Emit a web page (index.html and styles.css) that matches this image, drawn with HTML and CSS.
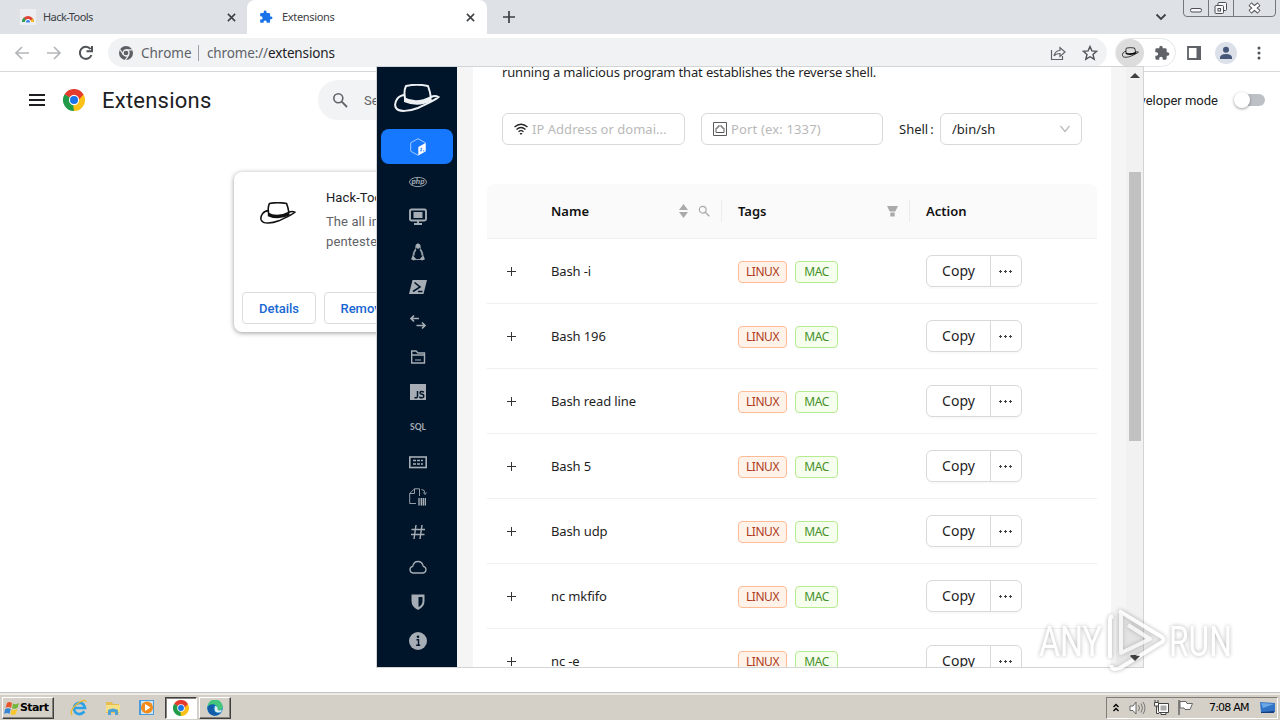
FILE: index.html
```html
<!DOCTYPE html>
<html lang="en">
<head>
<meta charset="utf-8">
<title>Extensions</title>
<link rel="stylesheet" href="styles.css">
</head>
<body>
<svg width="0" height="0" class="defs">
  <symbol id="hat" viewBox="0 0 46 28">
    <path d="M11 14C10 9 11 4 12 2Q23-.5 34 2Q36 7 37 14" fill="none" stroke="currentColor" stroke-width="2"/>
    <path d="M10 13Q22 20 37 12L38 17Q24 24 10 18Z" fill="currentColor"/>
    <path d="M11 11C4 11 0 18 1.500 23C4 29 16 27 24 24C32 20 40 17 44.500 13Q41 11 37 13" fill="none" stroke="currentColor" stroke-width="2"/>
  </symbol>
  <symbol id="puzzle" viewBox="0 0 24 24"><path fill="currentColor" d="M20.5 11H19V7a2 2 0 0 0-2-2h-4V3.5a2.5 2.5 0 0 0-5 0V5H4a2 2 0 0 0-2 2v3.8h1.500a2.700 2.700 0 0 1 0 5.400H2V20a2 2 0 0 0 2 2h3.800v-1.500a2.700 2.700 0 0 1 5.400 0V22H17a2 2 0 0 0 2-2v-4h1.500a2.500 2.500 0 0 0 0-5z"/></symbol>
  <symbol id="chrome" viewBox="0 0 24 24">
    <path fill="#e33b2e" d="M12 12L1.600 6A12 12 0 0 1 22.400 6Z"/>
    <path fill="#fbc116" d="M12 12L22.400 6A12 12 0 0 1 12 24Z"/>
    <path fill="#229b48" d="M12 12L12 24A12 12 0 0 1 1.600 6Z"/>
    <path fill="#e33b2e" d="M12 6H22.400L17 12Z"/><path fill="#229b48" d="M1.600 6L7 15L12 12Z"/><path fill="#fbc116" d="M17.200 15L12 24L11 17Z"/>
    <circle cx="12" cy="12" r="5.600" fill="#fff"/><circle cx="12" cy="12" r="4.400" fill="#1a73e8"/>
  </symbol>
  <symbol id="search" viewBox="0 0 16 16"><circle cx="6.300" cy="6.300" r="4.500" fill="none" stroke="currentColor" stroke-width="1.600"/><path d="M9.700 9.700L15 15" stroke="currentColor" stroke-width="1.800"/></symbol>
  <symbol id="close" viewBox="0 0 10 10"><path d="M1 1L9 9M9 1L1 9" stroke="currentColor" stroke-width="1.700"/></symbol>
</svg>

<div class="screen">
  <header class="tabs">
    <div class="tab tab-idle">
      <svg class="i16" viewBox="0 0 16 16"><rect width="16" height="16" fill="#eceef1"/><path d="M2 13A6 6 0 0 1 14 13" fill="#e04436"/><path d="M2 13A6 6 0 0 1 4 8.500L7 13Z" fill="#2da052"/><path d="M9 13L13 9.500L14 13Z" fill="#fbc116"/><circle cx="8" cy="13" r="2.600" fill="#4284f3" stroke="#fff"/><rect y="13.500" width="16" height="3" fill="#eceef1"/></svg>
      <span class="tab-title">Hack-Tools</span>
      <svg class="close"><use href="#close"/></svg>
    </div>
    <div class="tab tab-active">
      <svg class="i14 blue"><use href="#puzzle"/></svg>
      <span class="tab-title">Extensions</span>
      <svg class="close"><use href="#close"/></svg>
    </div>
    <svg class="newtab" viewBox="0 0 12 12"><path d="M6 0V12M0 6H12" stroke="#3c4043" stroke-width="1.700"/></svg>
    <svg class="chev" viewBox="0 0 12 8"><path d="M1.500 1.500L6 6L10.500 1.500" fill="none" stroke="#3c4043" stroke-width="1.800"/></svg>
    <svg class="winbtns" viewBox="0 0 94 18"><path d="M.5 0V13Q.5 16.500 4 16.500H89Q92.500 16.500 92.500 13V0M25.500 0V16M50.500 0V16" fill="none" stroke="#74777e"/><g fill="#f7f7f9" stroke="#4d5057"><rect x="7.500" y="8.500" width="11" height="3.500" rx="1.500"/><rect x="35" y="2.500" width="8.500" height="8" rx="1"/><rect x="32" y="5.500" width="8.500" height="8" rx="1"/><rect x="35" y="8.500" width="2.500" height="2.500"/></g><path d="M67 4L76 12M76 4L67 12" stroke="#4d5057" stroke-width="4.500"/><path d="M67.500 4.500L75.500 11.500M75.500 4.500L67.500 11.500" stroke="#fff" stroke-width="2.500"/></svg>
  </header>

  <div class="toolbar">
    <svg class="nav" viewBox="0 0 84 18"><g fill="none" stroke-width="1.700"><path d="M15 9H2M8 3L2 9L8 15M33 9H46M40 3L46 9L40 15" stroke="#b4b6b9"/><path d="M76.500 5A6 6 0 1 0 77.500 11M78 2V7.200H72.500" stroke="#505357" stroke-width="2"/></g></svg>
    <div class="omni">
      <svg class="i14" viewBox="0 0 14 14"><circle cx="7" cy="7" r="7" fill="#5c6065"/><circle cx="7" cy="7" r="3" fill="#5c6065" stroke="#eef0f2" stroke-width="1.300"/><path d="M7 3.800H13.300M4.200 8.500L1 3.500M9.800 8.600L6.500 14" stroke="#eef0f2" stroke-width="1.200"/></svg>
      <span class="site">Chrome</span><span class="bar"></span><span class="url"><span class="scheme">chrome://</span>extensions</span>
      <svg class="share" viewBox="0 0 16 16"><path d="M1.500 5V14.500H12.500V11M4 11C5 7 7 5.500 10 5.500V2.500L15 7L10 11.500V8.500C7.500 8.500 5.500 9 4 11Z" fill="none" stroke="#5f6368" stroke-width="1.200"/></svg>
      <svg class="star" viewBox="0 0 16 16"><path d="M8 1.500L9.900 5.900L14.700 6.300L11 9.500L12.200 14.200L8 11.700L3.800 14.200L5 9.500L1.300 6.300L6.100 5.900Z" fill="none" stroke="#505357" stroke-width="1.400"/></svg>
    </div>
    <div class="extpill"><span class="hatbtn"><svg class="minihat"><use href="#hat"/></svg></span><svg class="i16 grey"><use href="#puzzle"/></svg></div>
    <svg class="panel" viewBox="0 0 14 14"><path d="M1 1H13V13H1Z" fill="#fff" stroke="#5f6368" stroke-width="1.800"/><path d="M9.500 0H14V14H9.500Z" fill="#5f6368"/></svg>
    <svg class="avatar" viewBox="0 0 22 22"><circle cx="11" cy="11" r="11" fill="#dce0e8"/><circle cx="11" cy="7.700" r="3" fill="#46577a"/><path d="M5 17V15Q6 12 11 12Q16 12 17 15V17Z" fill="#46577a"/></svg>
    <svg class="dots" viewBox="0 0 4 14"><g fill="#505357"><circle cx="2" cy="2" r="1.500"/><circle cx="2" cy="7" r="1.500"/><circle cx="2" cy="12" r="1.500"/></g></svg>
  </div>

  <main class="page">
    <div class="pagebar">
      <svg class="menuicon" viewBox="0 0 16 12"><path d="M0 1H16M0 6H16M0 11H16" stroke="#1e1f22" stroke-width="2"/></svg>
      <svg class="logo"><use href="#chrome"/></svg>
      <h1>Extensions</h1>
      <div class="searchbox"><svg class="i16s"><use href="#search"/></svg><span>Search extensions</span></div>
      <span class="dev">Developer mode</span>
      <span class="toggle"><i></i></span>
    </div>
    <section class="extcard">
      <div class="extinfo">
        <svg class="cardhat"><use href="#hat"/></svg>
        <div><h2>Hack-Tools</h2><p>The all in one browser extension for pentesters</p></div>
      </div>
      <div class="extbtns"><span class="details">Details</span><span class="remove">Remove</span></div>
    </section>
  </main>

  <footer class="taskbar">
    <div class="start"><svg class="flag" viewBox="0 0 16 16"><path d="M3 3Q5 1 8 3L7 8Q4 6 1.500 8Z" fill="#e9562a"/><path d="M9 3.500Q12 5 15 3L13.500 8Q11 9.500 8 8.200Z" fill="#75b73b"/><path d="M1.200 9Q4 7.500 6.700 9L5.500 14Q3 12 0 14Z" fill="#3587d3"/><path d="M7.700 9.300Q10 11 13.300 9L12 14Q9.500 16 6.500 14.300Z" fill="#f8c52c"/></svg>Start</div>
    <svg class="tic ie" viewBox="0 0 18 18"><path d="M14.500 12.500Q10 17 5.500 13.500Q2 8.500 6 5Q13 1.500 15 9H5" fill="none" stroke="#2da1e5" stroke-width="2.600"/><path d="M2 16Q-1 12 7 5Q15-1 16 3" fill="none" stroke="#edb92e" stroke-width="1.400"/></svg>
    <svg class="tic" viewBox="0 0 18 18"><path d="M2 3H8L9 5H15V14H2Z" fill="#e6bd50"/><path d="M2 6H16V13H2Z" fill="#f7df86"/><path d="M4 16V11Q9 8 14 11V16H11V13H7V16Z" fill="#4fa3d2"/></svg>
    <svg class="tic wm" viewBox="0 0 18 18"><rect x="1" y="1" width="15" height="15" fill="#4c9bdb"/><rect x="3" y="2" width="12" height="13" fill="#cde6f6"/><circle cx="9" cy="8.500" r="6" fill="#f28a1c"/><path d="M7 5L12.500 8.500L7 12Z" fill="#fff"/></svg>
    <div class="task pressed"><svg class="i16b"><use href="#chrome"/></svg></div>
    <div class="task"><svg class="i16b" viewBox="0 0 16 16"><circle cx="8" cy="8" r="7.800" fill="#1587cc"/><path d="M.5 7A7.600 7.600 0 0 1 15.700 7Q15 11 10 10Q11 5 7 4.500Q3 4 .5 7Z" fill="#42c77c"/><path d="M.5 7Q3 3 8 5Q5 8 8 12Q10 14 14 12.500Q11 16 7 15.800Q0 14 .5 7Z" fill="#125ca8"/><path d="M8 6Q11 6 10.500 9.500Q12 11 15 10L14 12Q8 14 7.500 9Z" fill="#dfeef5"/></svg></div>
    <div class="tray">
      <svg class="traychev" viewBox="0 0 6 9"><path d="M.5 4L3 1.500L5.500 4M.5 8L3 5.500L5.500 8" fill="none" stroke="#000" stroke-width="1.400"/></svg>
      <svg class="traysnd" viewBox="0 0 17 14"><path d="M1 5H4L7 1V13L4 9.500H1Z" fill="#fff" stroke="#666"/><path d="M9.500 4Q11.500 7 9.500 10M12 2.500Q15 7 12 11.500M14 1Q18 7 14 13" fill="none" stroke="#777"/></svg>
      <svg class="traynet" viewBox="0 0 17 16"><path d="M5.500 3.500H15.500V12.500H5.500ZM8 12.500V14.500H13V12.500" fill="#fff" stroke="#444"/><rect x="7.500" y="5.500" width="6" height="5" fill="#aaa"/><path d="M1.500 2.500H5.500V6H1.500ZM3.500 6V13.500H6M2 0V2M5 0V2" fill="#fff" stroke="#444"/></svg>
      <svg class="trayflag" viewBox="0 0 16 15"><path d="M1 0V15" stroke="#666" stroke-width="1.500"/><path d="M2 1.500H8L9 3.500H14.500L12 9.500H7L6 8H2Z" fill="#fff" stroke="#666"/></svg>
      <span class="clock">7:08 AM</span>
      <svg class="desk" viewBox="0 0 15 13"><path d="M0 1L15 2V11L1 12Z" fill="#3374c7"/><path d="M1 2L14 3L3 7Z" fill="#6ba9e6"/><path d="M1 11L14 10V12H1Z" fill="#183d7c"/></svg>
    </div>
  </footer>

  <div class="popup">
    <aside class="side">
      <svg class="bighat"><use href="#hat"/></svg>
      <nav>
        <a class="sel"><svg viewBox="0 0 18 18"><path d="M9 .7L16.300 4.800V13.200L9 17.300L1.700 13.200V4.800Z" fill="none" stroke="#a4caff"/><path d="M9.300 9L16.500 5V13.300L9.300 17.300Z" fill="#fff"/><path d="M11.500 10.500L13 10L11.500 13L13 12.500M14 13L15.300 12.300" stroke="#1677ff" stroke-width=".8" fill="none"/></svg></a>
        <a><svg viewBox="0 0 18 18"><ellipse cx="9" cy="9" rx="8.500" ry="4.600" fill="none" stroke="currentColor" stroke-width=".9"/><text x="2.500" y="11.300" font-size="8" font-weight="700" font-style="italic" textLength="13" lengthAdjust="spacingAndGlyphs" class="rb">php</text></svg></a>
        <a><svg viewBox="0 0 18 18"><path d="M2.500 1.500H15.500Q17 1.500 17 3V11Q17 12.500 15.500 12.500H2.500Q1 12.500 1 11V3Q1 1.500 2.500 1.500ZM9 12.500V16M5 16H13" fill="none" stroke="currentColor" stroke-width="1.900"/><rect x="4.500" y="4" width="9" height="6" fill="currentColor"/></svg></a>
        <a><svg viewBox="0 0 18 18"><path d="M7 2Q9-.5 11 2L11.300 5.500Q14.500 9.500 14 13.500L12 16.500H6L4 13.500Q3.500 9.500 6.700 5.500Z" fill="none" stroke="currentColor" stroke-width=".9"/><path d="M7 2Q9-.5 11 2L11 4.500L9 6L7 4.500ZM3.800 12.500L7.200 16L5 17.500L2 16.300ZM14.200 12.500L10.800 16L13 17.500L16 16.300Z" fill="currentColor"/><path d="M7 6.500Q4.500 10 5 12.500M11 6.500Q13.500 10 13 12.500" stroke="currentColor" stroke-width="1.200" fill="none"/></svg></a>
        <a><svg viewBox="0 0 18 18"><path d="M3.500 2H18L14.500 16H0Z" fill="currentColor"/><path d="M5.500 4.500L11 9L4 13.500M9 13.500H13.500" fill="none" stroke="#001529" stroke-width="1.600"/></svg></a>
        <a><svg viewBox="0 0 18 18"><path d="M10 5.500H2M5 2.500L2 5.500L5 8.500M7.500 12.500H16M13 9.500L16 12.500L13 15.500" fill="none" stroke="currentColor" stroke-width="1.700"/></svg></a>
        <a><svg viewBox="0 0 18 18"><path d="M2.700 3H7L9 5H15.500V15H2.700ZM2.700 3V7H15.500" fill="none" stroke="currentColor" stroke-width="1.400"/><path d="M6 12H12" stroke="currentColor"/></svg></a>
        <a><svg viewBox="0 0 18 18"><rect x="1" y="1" width="16" height="16" fill="currentColor"/><path d="M8.500 8V13Q8.500 15.500 5.500 14.500M15 9Q11 7.500 11 10Q11 11 13 11.300Q15.500 12 14.500 14Q13 15.500 10.300 14" fill="none" stroke="#001529" stroke-width="1.500"/></svg></a>
        <a><svg viewBox="0 0 18 18"><text x="1" y="12" font-size="9.500" font-weight="700" textLength="16" lengthAdjust="spacingAndGlyphs" class="rb">SQL</text></svg></a>
        <a><svg viewBox="0 0 18 18"><rect x=".8" y="4" width="16.400" height="10.500" fill="none" stroke="currentColor" stroke-width="1.600"/><path d="M4 7.500H7M8 7.500H11M12 7.500H14M4 11H7M8 11H11M12 11H14" stroke="currentColor" stroke-width="1.500"/></svg></a>
        <a><svg viewBox="0 0 18 18"><path d="M5.500.8L.7 5.500V15.500H7M5.500.8V5.500H.7M5.500.8H10.500V8M12.500 1.500Q16 1.500 16 5.500M14.300 4.500L16 6.500L17.600 4.500" fill="none" stroke="currentColor" stroke-width=".9"/><path d="M9 10H17V17.500H9Z" fill="currentColor" fill-opacity=".4"/><path d="M10 10V17.500M12.500 10V17.500M14.500 10V17.500M16.500 10V17.500" stroke="currentColor" stroke-width="1"/></svg></a>
        <a><svg viewBox="0 0 18 18"><path d="M7 2L5 16M13 2L11 16M2.500 6.500H16M2 11.500H15.500" fill="none" stroke="currentColor" stroke-width="1.400"/></svg></a>
        <a><svg viewBox="0 0 18 18"><path d="M4 15A3.400 3.400 0 0 1 3.700 8.300Q4.800 3.500 9 3.500Q13.200 3.500 14.300 8.300A3.400 3.400 0 0 1 14 15Z" fill="none" stroke="currentColor" stroke-width="1.300"/></svg></a>
        <a><svg viewBox="0 0 18 18"><path d="M2.500 1.500H15.500V8Q15.500 14 9 17Q2.500 14 2.500 8Z" fill="currentColor"/><path d="M9.500 4H13.500V8Q13.500 12 9.500 14Z" fill="#001529"/></svg></a>
        <a class="last"><svg viewBox="0 0 18 18"><circle cx="9" cy="9" r="9" fill="currentColor"/><circle cx="9" cy="4.800" r="1.300" fill="#001529"/><path d="M7.500 7.700H9.500V13M7.200 13.300H11.200" fill="none" stroke="#001529" stroke-width="1.400"/></svg></a>
      </nav>
    </aside>
    <div class="content">
      <p class="intro">running a malicious program that establishes the reverse shell.</p>
      <div class="form">
        <div class="input"><svg class="wifi" viewBox="0 0 14 14"><path d="M.5 5Q7-.5 13.500 5M2.500 7.500Q7 3.500 11.500 7.500M4.500 9.700Q7 7.500 9.500 9.700" fill="none" stroke="#222" stroke-width="1.300"/><path d="M5.500 11L7 13L8.500 11Z" fill="#222"/></svg><span>IP Address or domai...</span></div>
        <div class="input"><svg class="port" viewBox="0 0 14 14"><path d="M.5.500H13.500V13.500H.5ZM3 10.500V6H5V4H9V6H11V10.500Z" fill="none" stroke="#5a5a5a"/></svg><span>Port (ex: 1337)</span></div>
        <label>Shell<b>:</b></label>
        <div class="select"><span>/bin/sh</span><svg viewBox="0 0 10 8"><path d="M.5 1L5 6.500L9.500 1" fill="none" stroke="#b9b9b9" stroke-width="1.200"/></svg></div>
      </div>
      <div class="table">
        <div class="thead"><span></span><span class="th name">Name<svg class="sort" viewBox="0 0 9 14"><path d="M4.500 0L9 6H0ZM4.500 14L9 8H0Z" fill="#aaa"/></svg><svg class="thsearch"><use href="#search"/></svg></span><span class="th tagsh">Tags<svg class="filter" viewBox="0 0 10 10"><path d="M0 0H10L7.500 5H2.500ZM3 6H7V9.500H3Z" fill="#aaa"/></svg></span><span class="th">Action</span></div>
        <div class="row"><span class="plus"></span><span>Bash -i</span><span class="tags"><i>LINUX</i><i class="mac">MAC</i></span><span class="btn"><b>Copy</b><em></em></span></div>
        <div class="row"><span class="plus"></span><span>Bash 196</span><span class="tags"><i>LINUX</i><i class="mac">MAC</i></span><span class="btn"><b>Copy</b><em></em></span></div>
        <div class="row"><span class="plus"></span><span>Bash read line</span><span class="tags"><i>LINUX</i><i class="mac">MAC</i></span><span class="btn"><b>Copy</b><em></em></span></div>
        <div class="row"><span class="plus"></span><span>Bash 5</span><span class="tags"><i>LINUX</i><i class="mac">MAC</i></span><span class="btn"><b>Copy</b><em></em></span></div>
        <div class="row"><span class="plus"></span><span>Bash udp</span><span class="tags"><i>LINUX</i><i class="mac">MAC</i></span><span class="btn"><b>Copy</b><em></em></span></div>
        <div class="row"><span class="plus"></span><span>nc mkfifo</span><span class="tags"><i>LINUX</i><i class="mac">MAC</i></span><span class="btn"><b>Copy</b><em></em></span></div>
        <div class="row"><span class="plus"></span><span>nc -e</span><span class="tags"><i>LINUX</i><i class="mac">MAC</i></span><span class="btn"><b>Copy</b><em></em></span></div>
      </div>
    </div>
    <div class="scroll"><i class="up"></i><span class="thumb"></span><i class="down"></i></div>
  </div>

  <svg class="mark" viewBox="0 0 200 70">
    <g class="marktext"><text x="3" y="51" font-size="43" textLength="63" lengthAdjust="spacingAndGlyphs">ANY</text><text x="133" y="51" font-size="43" textLength="63" lengthAdjust="spacingAndGlyphs">RUN</text></g>
    <path d="M74 53V15Q74 12 77 11M83 6L126 32Q129 35 126 37L84 63Q76 66 75 60M85 6V48L114 34L92 20" fill="none" stroke="#fff" stroke-width="4" stroke-linejoin="round"/>
    <path d="M80 12V60L126 35L84 7Z" fill="#bbb" fill-opacity=".15"/>
  </svg>
  <i class="downarrow"></i>
</div>
</body>
</html>
```
FILE: styles.css
```css
* { box-sizing: border-box; }
body { margin: 0; }
svg { display: block; flex: none; }
.defs { position: absolute; }
.screen { position: relative; width: 1280px; height: 720px; overflow: hidden; display: flex; flex-direction: column; background: #fff; font-family: "Noto Sans", sans-serif; }
.i14 { width: 14px; height: 14px; }
.i16, .i16s, .i16b { width: 16px; height: 16px; }
.blue { color: #1a73e8; }
.grey { color: #5f6368; }
.rb { font-family: Lato, sans-serif; fill: currentColor; }

/* Tab strip */
.tabs { height: 34px; background: #dee1e6; display: flex; align-items: center; flex: none; color: #3c4043; }
.tab { height: 34px; display: flex; align-items: center; font-size: 11px; }
.tab-title { margin-top: -1px; }
.tab-idle { width: 247px; padding: 0 11px 0 20px; }
.tab-idle .tab-title { margin-left: 7px; letter-spacing: -.55px; }
.tab-active { width: 240px; background: #fff; border-radius: 8px 8px 0 0; padding: 0 12px; }
.tab-active .tab-title { margin-left: 9px; letter-spacing: -.33px; }
.close { width: 9px; height: 9px; margin-left: auto; }
.newtab { width: 12px; height: 12px; margin-left: 16px; }
.chev { width: 12px; height: 8px; margin-left: auto; }
.winbtns { width: 94px; height: 18px; margin: 0 3px 0 16px; align-self: flex-start; }

/* Toolbar */
.toolbar { height: 38px; border-bottom: 1px solid #d5d7da; display: flex; align-items: center; flex: none; }
.nav { width: 84px; height: 18px; margin-left: 14px; }
.omni { margin-left: 10px; width: 999px; height: 29px; border-radius: 15px; background: #f0f2f4; display: flex; align-items: center; padding: 0 9px 0 11px; font-size: 13.5px; color: #5f6368; }
.site { margin-left: 8px; width: 50px; }
.bar { width: 1px; height: 16px; background: #9aa0a6; margin: 0 8px 0 7px; }
.url { color: #202124; letter-spacing: -.14px; }
.scheme { color: #5f6368; }
.share { width: 16px; height: 16px; margin-left: auto; }
.star { width: 16px; height: 16px; margin-left: 16px; }
.extpill { margin-left: 8px; width: 61px; height: 29px; border: 1px solid #e4e6e8; border-radius: 15px; display: flex; align-items: center; gap: 10px; }
.hatbtn { width: 28px; height: 28px; border-radius: 50%; background: #dcdcdc; display: flex; align-items: center; justify-content: center; }
.minihat { width: 17px; height: 11px; }
.panel { width: 14px; height: 14px; margin-left: 11px; }
.avatar { width: 22px; height: 22px; margin-left: 14px; }
.dots { width: 4px; height: 14px; margin-left: 20px; }

/* Extensions page */
.page { height: 620px; flex: none; font-family: Roboto, sans-serif; color: #202124; }
.pagebar { height: 56px; display: flex; align-items: center; padding: 0 15px 0 29px; }
.menuicon { width: 16px; height: 12px; }
.logo { width: 22px; height: 22px; margin-left: 18px; }
h1 { margin: 0 0 0 17px; font-size: 22px; font-weight: 400; letter-spacing: .23px; width: 216px; }
.searchbox { width: 640px; height: 40px; border-radius: 20px; background: #f1f3f4; display: flex; align-items: center; padding-left: 14px; font-size: 13px; color: #5f6368; }
.searchbox span { margin-left: 16px; }
.dev { margin-left: auto; font-size: 13px; }
.toggle { margin-left: 18px; width: 29px; height: 12px; border-radius: 6px; background: #bdc1c6; display: flex; align-items: center; }
.toggle i { width: 16px; height: 16px; border-radius: 50%; background: #fff; box-shadow: 0 1px 3px #0006; flex: none; margin-left: -2px; }
.extcard { margin: 44px 0 0 234px; width: 400px; height: 160px; border-radius: 8px; box-shadow: 0 1px 5px #0006; padding: 16px 8px 8px; display: flex; flex-direction: column; justify-content: space-between; }
.extinfo { display: flex; }
.cardhat { width: 36px; height: 22px; margin: 14px 0 0 18px; color: #111; }
.extinfo div { margin-left: 30px; width: 225px; white-space: nowrap; }
h2 { margin: 0; font-size: 13px; font-weight: 400; line-height: 20px; letter-spacing: .1px; }
.extinfo p { margin: 4px 0 0; font-size: 13px; line-height: 20px; color: #5f6368; letter-spacing: .1px; white-space: normal; width: 225px; }
.extbtns { display: flex; gap: 8px; font-size: 13px; font-weight: 500; color: #1967d2; }
.extbtns span { height: 32px; border: 1px solid #dadce0; border-radius: 4px; display: flex; align-items: center; justify-content: center; }
.extbtns .details { width: 74px; }
.extbtns .remove { width: 80px; }

/* Taskbar */
.taskbar { height: 28px; background: #d4d0c8; border-top: 1px solid #c2c4c2; box-shadow: inset 0 2px #eeece7; display: flex; align-items: center; padding: 2px 2px 0; flex: none; }
.start, .task { border: 1px solid; border-color: #fff #404040 #404040 #fff; box-shadow: inset -1px -1px #858279; height: 22px; display: flex; align-items: center; }
.start { width: 52px; font: 700 11px "DejaVu Sans", sans-serif; letter-spacing: -.6px; padding-left: 1px; }
.flag { width: 16px; height: 16px; margin-right: 0; }
.tic { width: 18px; height: 18px; margin-left: 16px; }
.task { width: 32px; justify-content: center; margin-left: 2px; }
.pressed { background: #fff; border-color: #404040 #fff #fff #404040; box-shadow: inset 1px 1px #858279; margin-left: 9px; }
.tray { margin-left: auto; width: 172px; height: 22px; border: 1px solid; border-color: #807d77 #fff #fff #807d77; display: flex; align-items: center; }
.traychev { width: 6px; height: 9px; margin-left: 6px; }
.traysnd { width: 17px; height: 14px; margin-left: 10px; }
.traynet { width: 17px; height: 16px; margin-left: 7px; }
.trayflag { width: 16px; height: 15px; margin-left: 8px; }
.clock { font: 11px "DejaVu Sans", sans-serif; letter-spacing: -.8px; margin-left: 15px; width: 41px; white-space: nowrap; }
.desk { width: 15px; height: 13px; margin-left: 10px; }

/* Extension popup */
.popup { position: absolute; left: 376px; top: 66px; width: 768px; height: 602px; border: 1px solid #d3d4d6; background: #f5f5f5; display: flex; overflow: hidden; color: #1f1f1f; font-size: 13px; }
.side { width: 80px; background: #001529; color: #a6adb4; flex: none; padding: 17px 4px 0; }
.bighat { width: 46px; height: 28px; margin-left: 13px; color: #eef1f3; }
nav { margin-top: 17px; }
nav a { display: flex; height: 35px; align-items: center; justify-content: center; padding-left: 2px; }
nav svg { width: 18px; height: 18px; }
.sel { background: #1677ff; border-radius: 8px; }
nav .last { margin-top: 4px; }
.content { margin-left: 16px; width: 638px; background: #fff; padding: 0 14px; flex: none; }
.intro { margin: -6px 0 0 15px; height: 22px; line-height: 22px; letter-spacing: -.16px; white-space: nowrap; }
.form { margin: 30px 0 0 15px; display: flex; height: 32px; align-items: center; }
.input, .select { height: 32px; border: 1px solid #d9d9d9; border-radius: 6px; display: flex; align-items: center; white-space: nowrap; }
.input { width: 183px; margin-right: 16px; padding-left: 11px; color: #b9b9b9; }
.input + .input { width: 182px; }
.input span { margin-left: 4px; letter-spacing: .03px; }
.input + .input span { letter-spacing: .15px; }
.wifi, .port { width: 14px; height: 14px; }
label { width: 41px; white-space: nowrap; }
label b { font-weight: 400; margin-left: 2px; }
.select { width: 142px; padding: 0 11px; justify-content: space-between; }
.select svg { width: 10px; height: 8px; }
.table { margin-top: 39px; }
.thead, .row { display: grid; grid-template-columns: 64px 187px 188px 171px; align-items: center; border-bottom: 1px solid #f0f0f0; }
.thead { height: 55px; background: #fafafa; border-radius: 8px 8px 0 0; font-weight: 600; color: #111; }
.row { height: 65px; letter-spacing: -.12px; }
.th { display: flex; align-items: center; height: 22px; }
.name, .tagsh { border-right: 1px solid #ececec; margin-right: 16px; }
.sort { width: 9px; height: 14px; margin-left: auto; }
.thsearch { width: 12px; height: 12px; color: #aaa; margin: 0 11px 0 10px; }
.filter { width: 11px; height: 11px; margin: 0 11px 0 auto; }
.plus { width: 9px; height: 9px; margin-left: 20px; background: linear-gradient(#333,#333) center/9px 1px no-repeat, linear-gradient(#333,#333) center/1px 9px no-repeat; }
.tags { display: flex; gap: 8px; margin-top: 2px; }
.tags i { font-style: normal; font-size: 12px; line-height: 20px; width: 49px; text-align: center; border: 1px solid #ffbb96; background: #fff2e8; color: #ad3a1c; border-radius: 4px; letter-spacing: -.45px; }
.tags .mac { width: 43px; border-color: #b7eb8f; background: #f6ffed; color: #46902a; }
.btn { width: 96px; height: 32px; border: 1px solid #d9d9d9; border-radius: 6px; box-shadow: 0 2px 0 #00000005; display: flex; }
.btn b { font-weight: 400; font-size: 14px; width: 64px; line-height: 30px; text-align: center; border-right: 1px solid #d9d9d9; letter-spacing: 0; }
.btn em { background: radial-gradient(circle, #444 1px, transparent 1.300px) 0 0/5px 5px repeat-x; width: 15px; height: 5px; flex: none; margin: 13px 0 0 7px; }
.scroll { margin-left: auto; width: 17px; background: #f1f1f1; display: flex; flex-direction: column; align-items: center; }
.scroll i { border: 5px solid transparent; width: 0; height: 0; }
.scroll .up { border-bottom-color: #404040; border-top: 0; margin-top: 6px; }
.thumb { width: 12px; height: 269px; background: #c1c1c1; margin-top: 94px; }
.scroll .down { border-top-color: #404040; border-bottom: 0; margin-top: auto; margin-bottom: 7px; }

/* Watermark */
.mark { position: absolute; left: 1036px; top: 605px; width: 200px; height: 70px; filter: drop-shadow(0 0 2px #0006); opacity: .75; }
.marktext { font-family: Roboto, sans-serif; fill: #fff; }
.downarrow { position: absolute; left: 1130px; top: 656px; border: 5px solid transparent; border-top-color: #404040; border-bottom: 0; }
```
